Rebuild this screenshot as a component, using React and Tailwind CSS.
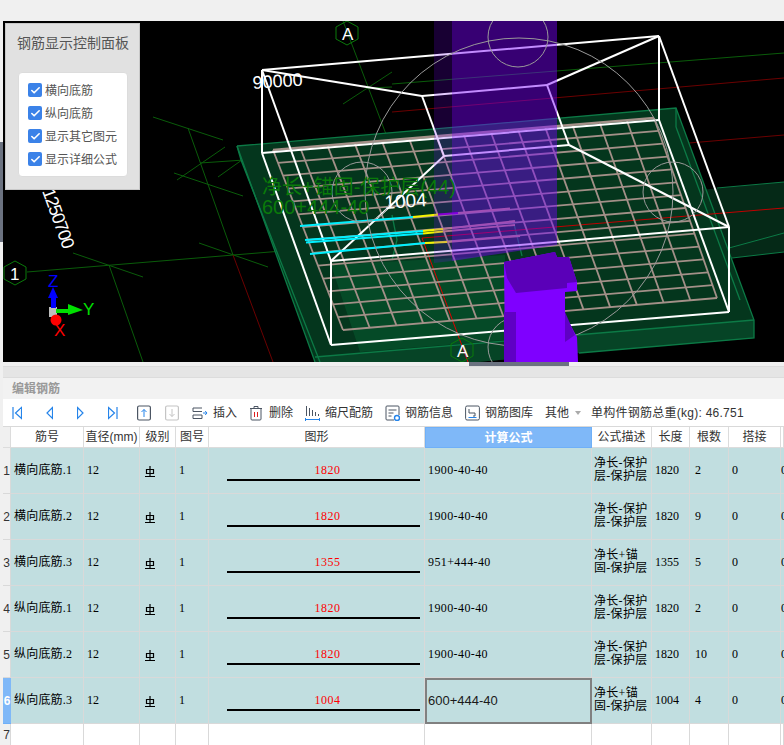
import { Check } from "lucide-react";

const lerp = (a, b, t) => [a[0] + (b[0] - a[0]) * t, a[1] + (b[1] - a[1]) * t];

// rebar mesh corners in the 3D view
const MESH = { tl: [273, 150], tr: [654, 118], br: [717, 298], bl: [343, 330] };
const BARS = 15;

function meshBars() {
  const bars = [];
  for (let i = 0; i < BARS; i++) {
    const t = i / (BARS - 1);
    bars.push([lerp(MESH.tl, MESH.tr, t), lerp(MESH.bl, MESH.br, t)]);
    bars.push([lerp(MESH.tl, MESH.bl, t), lerp(MESH.tr, MESH.br, t)]);
  }
  return bars;
}

const GREEN_LINES = [
  [27, 272, 440, 238],
  [343, 21, 392, 150],
  [188, 128, 233, 255],
  [153, 117, 223, 140],
  [174, 173, 243, 196],
  [199, 243, 268, 267],
  [73, 253, 143, 277],
  [109, 265, 143, 362],
  [177, 180, 225, 147],
  [218, 177, 263, 145],
  [200, 163, 392, 150],
  [343, 104, 392, 72],
  [367, 88, 392, 87],
  [392, 84, 784, 53],
];

const BOX_LINES = [
  [262, 70, 659, 36],
  [262, 70, 422, 96],
  [422, 96, 547, 85],
  [547, 85, 659, 36],
  [262, 70, 262, 153],
  [659, 36, 659, 120],
  [262, 153, 659, 120],
  [659, 36, 729, 227],
  [729, 227, 729, 312],
  [331, 261, 331, 345],
  [262, 70, 331, 261],
  [262, 153, 331, 345],
  [331, 261, 729, 227],
  [331, 345, 729, 312],
  [659, 120, 729, 312],
  [422, 96, 444, 156],
  [444, 156, 569, 145],
  [547, 85, 569, 145],
  [444, 156, 331, 261],
  [569, 145, 729, 227],
];

const SEGMENT_BARS = [
  [[300, 226], [413, 217], [438, 214.5], [458, 213], [510, 208.5]],
  [[305, 240], [423, 231], [443, 229], [443, 229], [515, 221]],
  [[306, 242.5], [423, 233.5], [443, 231.5], [443, 231.5], [515, 225]],
  [[310, 254], [425, 243], [447, 242], [447, 242], [520, 236]],
];

function Scene() {
  return (
    <svg viewBox="3 21 781 341" className="block w-[781px] h-[341px] bg-black">
      {/* grid axes */}
      {GREEN_LINES.map((l, i) => (
        <line key={i} x1={l[0]} y1={l[1]} x2={l[2]} y2={l[3]} stroke="#0a5c0a" strokeWidth="1" />
      ))}
      <line x1="233" y1="255" x2="273" y2="362" stroke="#6b0000" />
      <line x1="392" y1="112" x2="784" y2="78" stroke="#6b0000" />
      <line x1="392" y1="168" x2="784" y2="135" stroke="#6b0000" />

      {/* beam on the right */}
      <polygon points="700,190 784,182 784,252 732,258 700,262" fill="#0a5c34" fillOpacity="0.45" />
      <line x1="717" y1="188" x2="784" y2="182" stroke="#0c7a46" />
      <line x1="729" y1="248" x2="784" y2="233" stroke="#0c7a46" />
      <line x1="732" y1="258" x2="784" y2="252" stroke="#0c7a46" />

      {/* slab */}
      <polygon points="237,146 676,108 754,320 754,338 579,353 330,375 315,362" fill="#04361d" />
      <polygon points="331,265 505,255 505,340 360,352" fill="#0a7a40" fillOpacity="0.3" />
      <polygon points="315,357 754,320 754,338 579,353 330,375" fill="#064426" />
      <g stroke="#0c7a46" strokeWidth="1.3" fill="none">
        <polyline points="237,146 676,108 754,320 754,338 579,353" />
        <line x1="315" y1="357" x2="754" y2="320" />
        <line x1="237" y1="146" x2="315" y2="362" />
        <line x1="241" y1="160" x2="320" y2="362" />
        <line x1="237" y1="146" x2="241" y2="160" />
        <line x1="676" y1="108" x2="676" y2="127" />
        <line x1="676" y1="127" x2="740" y2="300" />
        <polyline points="392,215 397,240 392,260" />
        <polyline points="513,220 522,256" />
      </g>

      {/* red axis over the slab */}
      <line x1="422" y1="238" x2="784" y2="208" stroke="#c00000" />
      <line x1="422" y1="238" x2="468" y2="362" stroke="#e00000" />

      {/* rebar mesh */}
      {meshBars().map((b, i) => (
        <line
          key={i}
          x1={b[0][0]}
          y1={b[0][1]}
          x2={b[1][0]}
          y2={b[1][1]}
          stroke="#a39088"
          strokeWidth={i === 1 ? 2.6 : 1.8}
        />
      ))}

      {/* wire box */}
      {BOX_LINES.map((l, i) => (
        <line key={i} x1={l[0]} y1={l[1]} x2={l[2]} y2={l[3]} stroke="#fff" strokeWidth="2" />
      ))}

      {/* highlighted bars */}
      {SEGMENT_BARS.map((s, i) => (
        <g key={i} strokeWidth="1.8" fill="none">
          <line x1={s[0][0]} y1={s[0][1]} x2={s[1][0]} y2={s[1][1]} stroke="#00f0ff" />
          <line x1={s[1][0]} y1={s[1][1]} x2={s[2][0]} y2={s[2][1]} stroke="#f5f500" />
          <line x1={s[2][0]} y1={s[2][1]} x2={s[3][0]} y2={s[3][1]} stroke="#8a00c8" />
          <line x1={s[3][0]} y1={s[3][1]} x2={s[4][0]} y2={s[4][1]} stroke="#c09078" />
        </g>
      ))}

      {/* translucent column */}
      <polygon points="434,21 452,21 452,261 434,263" fill="#7a00ff" fillOpacity="0.2" />
      <polygon points="452,21 557,21 557,245 452,261" fill="#7a00ff" fillOpacity="0.45" />

      {/* axis circles */}
      <g stroke="#9a9a9a" strokeWidth="1" fill="none">
        <circle cx="519" cy="192" r="154" />
        <circle cx="518" cy="37" r="30" />
        <circle cx="518" cy="347" r="30" />
        <circle cx="673" cy="192" r="30" />
        <circle cx="362" cy="192" r="30" />
      </g>

      {/* solid column */}
      <polygon points="504,262 505,362 578,362 577,337 565,315 565,292 577,291 577,282 569,257 557,257 555,252" fill="#7f00ff" />
      <polygon points="504,262 555,252 557,257 569,257 577,282 567,283 567,288 516,293 507,278" fill="#5a00b8" />
      <polygon points="504,312 516,312 516,362 504,362" fill="#5f00c4" />
      <polygon points="565,312 575,335 565,342" fill="#5f00c4" />

      {/* texts in the model */}
      <text x="262" y="194" fontSize="20" fill="#0a7a0a">净长+锚固-保护层(44)</text>
      <text x="262" y="214" fontSize="20" fill="#0a7a0a">600+444-40</text>
      <text x="385" y="209" fontSize="19" fill="#fff" transform="rotate(-4 385 209)">1004</text>
      <text x="253" y="89" fontSize="18" fill="#fff" transform="rotate(-4 253 89)">90000</text>
      <text x="42" y="191" fontSize="18" fill="#fff" transform="rotate(70 42 191)" letterSpacing="-1.2">1250700</text>

      {/* axis labels */}
      <polygon points="347,21 358,27 358,39 347,45 336,39 336,27" fill="none" stroke="#0a7a0a" />
      <text x="342" y="40" fontSize="17" fill="#fff">A</text>
      <polygon points="15,261 26,267 26,279 15,285 4,279 4,267" fill="none" stroke="#0a7a0a" />
      <text x="10" y="280" fontSize="17" fill="#fff">1</text>
      <polygon points="462,338 473,344 473,356 462,362 451,356 451,344" fill="none" stroke="#0a7a0a" />
      <text x="457" y="357" fontSize="17" fill="#fff">A</text>

      {/* gizmo */}
      <rect x="49" y="307" width="8" height="10" fill="#bdbdbd" />
      <rect x="51" y="296" width="5" height="12" fill="#0000ff" />
      <polygon points="53,287 58,298 48,298" fill="#0000ff" />
      <rect x="56" y="309" width="14" height="4" fill="#00e000" />
      <polygon points="83,310 68,304 68,315" fill="#00e000" />
      <circle cx="56" cy="320" r="5.5" fill="#ff0000" />
      <text x="48" y="287" fontSize="17" fill="#0000ff">Z</text>
      <text x="83" y="315" fontSize="17" fill="#00e000">Y</text>
      <text x="54" y="336" fontSize="17" fill="#ff0000">X</text>
    </svg>
  );
}

function PanelCheck({ label }) {
  return (
    <div className="flex items-center h-[14px] gap-[3px]">
      <span className="flex items-center justify-center w-[14px] h-[14px] rounded-[2px] bg-[#3b82e8]">
        <Check size={11} color="#fff" strokeWidth={3.5} />
      </span>
      <span className="text-[12px] leading-none text-[#555] pt-[1px]">{label}</span>
    </div>
  );
}

function ControlPanel() {
  return (
    <div className="absolute left-[2px] top-[2px] w-[135px] h-[167px] bg-[#e1e1e1] border border-[#c8c8c8] pl-[11px]">
      <div className="text-[14px] leading-none text-[#555] pt-[12px] whitespace-nowrap">钢筋显示控制面板</div>
      <div className="mt-[22px] ml-[1px] w-[110px] h-[105px] bg-white border border-[#dcdcdc] rounded-[4px] pl-[9px] pt-[10px] flex flex-col gap-[9px]">
        <PanelCheck label="横向底筋" />
        <PanelCheck label="纵向底筋" />
        <PanelCheck label="显示其它图元" />
        <PanelCheck label="显示详细公式" />
      </div>
    </div>
  );
}

function Toolbar() {
  const blue = "#2584ea";
  const slate = "#4b5563";
  return (
    <div className="flex items-center h-[28px] bg-white border-b border-[#d9d9d9] pl-[9px] text-[12px] text-[#333] whitespace-nowrap">
      <svg width="10" height="14" fill="none" stroke={blue} strokeWidth="1.2">
        <path d="M1 1V13M9.5 1.500 3.500 7l6 5.500z" />
      </svg>
      <svg className="ml-[24px]" width="7" height="14" fill="none" stroke={blue} strokeWidth="1.2">
        <path d="M6.500 1.500 1 7l5.500 5.500z" />
      </svg>
      <svg className="ml-[24px]" width="7" height="14" fill="none" stroke={blue} strokeWidth="1.2">
        <path d="M.5 1.500 6 7l-5.500 5.500z" />
      </svg>
      <svg className="ml-[24px]" width="10" height="14" fill="none" stroke={blue} strokeWidth="1.2">
        <path d="M9 1V13M.5 1.500 6.500 7l-6 5.500z" />
      </svg>
      <svg className="ml-[19px]" width="14" height="16" fill="none">
        <rect x=".6" y="1" width="12.800" height="14" rx="1.500" stroke={slate} strokeWidth="1.2" />
        <path d="M7 12V4.500M4.500 7 7 4.500 9.500 7" stroke={blue} />
      </svg>
      <svg className="ml-[14px]" width="14" height="16" fill="none">
        <rect x=".6" y="1" width="12.800" height="14" rx="1.500" stroke="#c4c4c4" strokeWidth="1.2" />
        <path d="M7 4v7.500M4.500 9 7 11.500 9.500 9" stroke="#c4c4c4" />
      </svg>
      <svg className="ml-[13px]" width="16" height="14" fill="none">
        <path d="M10 2H1v3.500h9M1 9h9v3.500H1V9z" stroke={slate} />
        <path d="M11 7h4M13.200 5 15 7l-1.800 2" stroke={blue} />
      </svg>
      <span className="ml-[5px] pt-[1px]">插入</span>
      <svg className="ml-[12px]" width="14" height="16" fill="none">
        <path d="M1 3.500h12M5 3.500V1.500h4v2M2 3.500v10.500a1 1 0 0 0 1 1h8a1 1 0 0 0 1-1V3.500" stroke={slate} />
        <path d="M5.500 7v5M8.500 7v5" stroke="#e02020" />
      </svg>
      <span className="ml-[6px] pt-[1px]">删除</span>
      <svg className="ml-[12px]" width="15" height="16" fill="none">
        <path d="M1.500 1v10M4.500 3v8M7.500 5v6M10.500 7v4M13.500 9v2" stroke={slate} />
        <path d="M.5 14.500h14M.5 13v3M14.500 13v3" stroke={blue} />
      </svg>
      <span className="ml-[5px] pt-[1px]">缩尺配筋</span>
      <svg className="ml-[12px]" width="15" height="16" fill="none">
        <path d="M9 15H2a1 1 0 0 1-1-1V2a1 1 0 0 1 1-1h11a1 1 0 0 1 1 1v8" stroke={slate} />
        <path d="M3.500 5h8M3.500 8h5M3.500 11h3" stroke={slate} />
        <circle cx="12" cy="13" r="2.500" stroke={blue} strokeWidth="1.400" />
      </svg>
      <span className="ml-[5px] pt-[1px]">钢筋信息</span>
      <svg className="ml-[12px]" width="15" height="16" fill="none">
        <rect x=".6" y="1" width="13.800" height="14" rx="1.500" stroke={slate} />
        <path d="M4 4v4h6v3H8" stroke={slate} />
        <path d="M3.500 12.500h8" stroke={blue} />
      </svg>
      <span className="ml-[5px] pt-[1px]">钢筋图库</span>
      <span className="ml-[12px] pt-[1px]">其他</span>
      <span className="ml-[6px] w-0 h-0 border-x-[3px] border-x-transparent border-t-[4px] border-t-[#aaa]" />
      <span className="ml-[10px] pt-[1px] tracking-[0.25px]">单构件钢筋总重(kg): 46.751</span>
    </div>
  );
}

const COLS = "grid grid-cols-[8px_73px_56px_36px_33px_216px_167px_60px_38px_39px_52px_3px]";
const serif = "font-['Liberation_Serif','Noto_Sans_CJK_SC',serif]";

function HeaderCell({ children, active }) {
  return (
    <div
      className={
        active
          ? "flex items-center justify-center bg-[#7fb8f8] text-white font-bold border border-[#6fb0f8] text-[12px]"
          : "flex items-center justify-center border-r border-b border-[#dcdcdc] text-[12px] text-[#333] whitespace-nowrap overflow-hidden"
      }
    >
      {children}
    </div>
  );
}

function GradeSymbol() {
  return (
    <svg width="10" height="11" fill="none" stroke="#000" strokeWidth="1.2">
      <path d="M5 0V10M1.500 3.500H8.500V7.500H1.500ZM0 10.500H10" />
    </svg>
  );
}

const ROWS = [
  { name: "横向底筋.1", shape: "1820", formula: "1900-40-40", desc: ["净长-保护", "层-保护层"], len: "1820", count: "2" },
  { name: "横向底筋.2", shape: "1820", formula: "1900-40-40", desc: ["净长-保护", "层-保护层"], len: "1820", count: "9" },
  { name: "横向底筋.3", shape: "1355", formula: "951+444-40", desc: ["净长+锚", "固-保护层"], len: "1355", count: "5" },
  { name: "纵向底筋.1", shape: "1820", formula: "1900-40-40", desc: ["净长-保护", "层-保护层"], len: "1820", count: "2" },
  { name: "纵向底筋.2", shape: "1820", formula: "1900-40-40", desc: ["净长-保护", "层-保护层"], len: "1820", count: "10" },
  { name: "纵向底筋.3", shape: "1004", formula: "600+444-40", desc: ["净长+锚", "固-保护层"], len: "1004", count: "4", selected: true },
];

function Row({ row, index }) {
  const base = "border-r border-b border-[#d9d9d9] bg-[#c1dee0] overflow-hidden text-[12px] text-black";
  const cell = `${base} flex items-center pb-[1px] ${serif}`;
  return (
    <div className={`${COLS} h-[46px]`}>
      <div
        className={
          row.selected
            ? "flex items-center justify-center bg-[#7fb8f8] text-white text-[12px] font-bold border-b border-[#6fb0f8]"
            : "flex items-center justify-center bg-[#f0f0f0] text-[#333] text-[12px] border-r border-b border-[#d9d9d9]"
        }
      >
        {index + 1}
      </div>
      <div className={`${cell} pl-[3px] whitespace-nowrap tracking-[0.2px]`}>{row.name}</div>
      <div className={`${cell} pl-[3px]`}>12</div>
      <div className={`${base} flex items-center pl-[5px] pt-[3px] pb-[1px]`}>
        <GradeSymbol />
      </div>
      <div className={`${cell} pl-[3px]`}>1</div>
      <div className={`${base} ${serif} flex flex-col pl-[18px] pr-[4px] pt-[15px]`}>
        <div className="text-[#f00] text-center tracking-[0.5px] leading-[14px] h-[14px] pl-[8px]">{row.shape}</div>
        <div className="h-[2px] bg-black mt-[2px]" />
      </div>
      {row.selected ? (
        <div className="flex items-center border-2 border-[#808080] bg-[#c1dee0] pl-[1px] text-[13px] text-[#1a1a1a]">{row.formula}</div>
      ) : (
        <div className={`${cell} pl-[3px] tracking-[0.4px]`}>{row.formula}</div>
      )}
      <div className={`${cell} pl-[2px] leading-[13px] whitespace-nowrap tracking-[0.3px]`}>
        <div>
          <div>{row.desc[0]}</div>
          <div>{row.desc[1]}</div>
        </div>
      </div>
      <div className={`${cell} pl-[3px]`}>{row.len}</div>
      <div className={`${cell} pl-[5px]`}>{row.count}</div>
      <div className={`${cell} pl-[3px]`}>0</div>
      <div className={`${base} ${serif} flex items-center pb-[1px] !border-r-0`}>0</div>
    </div>
  );
}

function EmptyRow() {
  return (
    <div className={`${COLS} h-[21px]`}>
      <div className="flex items-center justify-center bg-[#f0f0f0] text-[#333] text-[12px] border-r border-[#d9d9d9]">7</div>
      {Array.from({ length: 11 }).map((_, i) => (
        <div key={i} className="border-r border-[#d9d9d9] bg-white" />
      ))}
    </div>
  );
}

export default function App() {
  return (
    <div className="w-[784px] h-[745px] overflow-hidden bg-[#f0f0f0] font-['Liberation_Sans','Noto_Sans_CJK_SC',sans-serif]">
      <div className="h-[21px]" />
      <div className="flex h-[341px]">
        <div className="relative w-[3px] shrink-0">
          <div className="absolute left-0 top-[121px] w-[3px] h-[100px] bg-[#6b7280]" />
        </div>
        <div className="relative flex-1">
          <Scene />
          <ControlPanel />
          <div className="absolute left-[466px] -bottom-[4px] w-[100px] h-[4px] bg-[#6b7280]" />
        </div>
      </div>
      <div className="h-[4px]" />
      <div className="ml-[3px]">
        <div className="h-[11px] bg-[#e5e5e5] border-t border-[#dcdcdc]" />
        <div className="flex items-center h-[22px] bg-[#f2f2f2] border-t border-[#dcdcdc] pl-[9px] text-[12px] font-bold text-[#999]">
          编辑钢筋
        </div>
        <Toolbar />
        <div className={`${COLS} h-[21px] bg-white`}>
          <div className="bg-[#f0f0f0] border-r border-b border-[#dcdcdc]" />
          <HeaderCell>筋号</HeaderCell>
          <HeaderCell>直径(mm)</HeaderCell>
          <HeaderCell>级别</HeaderCell>
          <HeaderCell>图号</HeaderCell>
          <HeaderCell>图形</HeaderCell>
          <HeaderCell active>计算公式</HeaderCell>
          <HeaderCell>公式描述</HeaderCell>
          <HeaderCell>长度</HeaderCell>
          <HeaderCell>根数</HeaderCell>
          <HeaderCell>搭接</HeaderCell>
          <HeaderCell />
        </div>
        {ROWS.map((row, i) => (
          <Row key={row.name} row={row} index={i} />
        ))}
        <EmptyRow />
      </div>
    </div>
  );
}
